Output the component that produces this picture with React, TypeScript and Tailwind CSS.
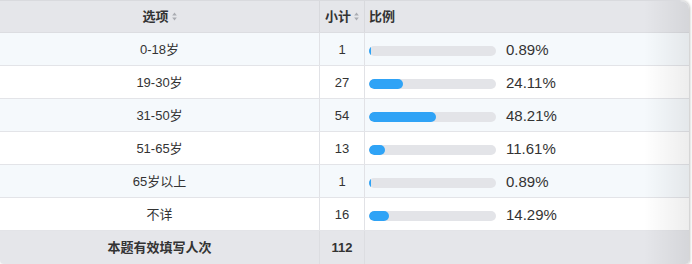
import React from 'react';

const rows = [
  { label: '0-18岁', count: 1, pct: 0.89 },
  { label: '19-30岁', count: 27, pct: 24.11 },
  { label: '31-50岁', count: 54, pct: 48.21 },
  { label: '51-65岁', count: 13, pct: 11.61 },
  { label: '65岁以上', count: 1, pct: 0.89 },
  { label: '不详', count: 16, pct: 14.29 },
];

function SortIcon() {
  return (
    <svg width="5" height="9" viewBox="0 0 5 9" className="ml-[3px] inline-block">
      <path d="M2.5 0.5 L4.8 3.6 L0.2 3.6 Z" fill="#a9abb1" />
      <path d="M2.5 8.5 L4.8 5.4 L0.2 5.4 Z" fill="#a9abb1" />
    </svg>
  );
}

export default function App() {
  return (
    <div
      className="w-[692px] h-[264px] bg-white overflow-hidden text-[13px] text-[#333]"
      style={{ fontFamily: '"Liberation Sans", "Noto Sans CJK SC", sans-serif' }}
    >
      <div className="relative w-[689px] h-[264px] rounded-tr-[9px] rounded-br-[4px] rounded-bl-[4px] overflow-hidden border-t border-[#d9dade] shadow-[1px_0_3px_rgba(0,0,0,0.25)]">
        {/* header */}
        <div className="grid grid-cols-[320px_45px_1fr] h-[32px] bg-[#e5e6ea] border-b border-[#dcdde1] font-semibold">
          <div className="flex items-center justify-center border-r border-[#d8d9dd]">
            选项
            <SortIcon />
          </div>
          <div className="flex items-center justify-center border-r border-[#d8d9dd]">
            小计
            <SortIcon />
          </div>
          <div className="flex items-center pl-[4px]">比例</div>
        </div>

        {/* rows */}
        {rows.map((r, i) => (
          <div
            key={r.label}
            className={
              'grid grid-cols-[320px_45px_1fr] h-[33px] border-b border-[#e3e4e8] ' +
              (i % 2 === 0 ? 'bg-[#f5f9fc]' : 'bg-white')
            }
          >
            <div className="flex items-center justify-center border-r border-[#e1e2e6] pt-[1px]">{r.label}</div>
            <div className="flex items-center justify-center border-r border-[#e1e2e6] pt-[1px]">{r.count}</div>
            <div className="flex items-center pl-[4px] pt-[3px]">
              <div className="w-[127px] h-[10px] rounded-full bg-[#e3e4e8] overflow-hidden">
                <div
                  className="h-full rounded-full bg-[#2fa3f6]"
                  style={{ width: `max(2px, ${(r.pct * 1.1).toFixed(2)}%)` }}
                />
              </div>
              <span className="ml-[10px] text-[15px]">{r.pct.toFixed(2)}%</span>
            </div>
          </div>
        ))}

        {/* footer */}
        <div className="grid grid-cols-[320px_45px_1fr] h-[34px] bg-[#e5e6ea] font-bold">
          <div className="flex items-center justify-center border-r border-[#dcdde1]">本题有效填写人次</div>
          <div className="flex items-center justify-center border-r border-[#dcdde1]">112</div>
          <div />
        </div>

        {/* right edge fade */}
        <div className="absolute top-0 right-0 w-[45px] h-full bg-gradient-to-r from-transparent to-[rgba(0,0,0,0.07)] pointer-events-none" />
      </div>
    </div>
  );
}
